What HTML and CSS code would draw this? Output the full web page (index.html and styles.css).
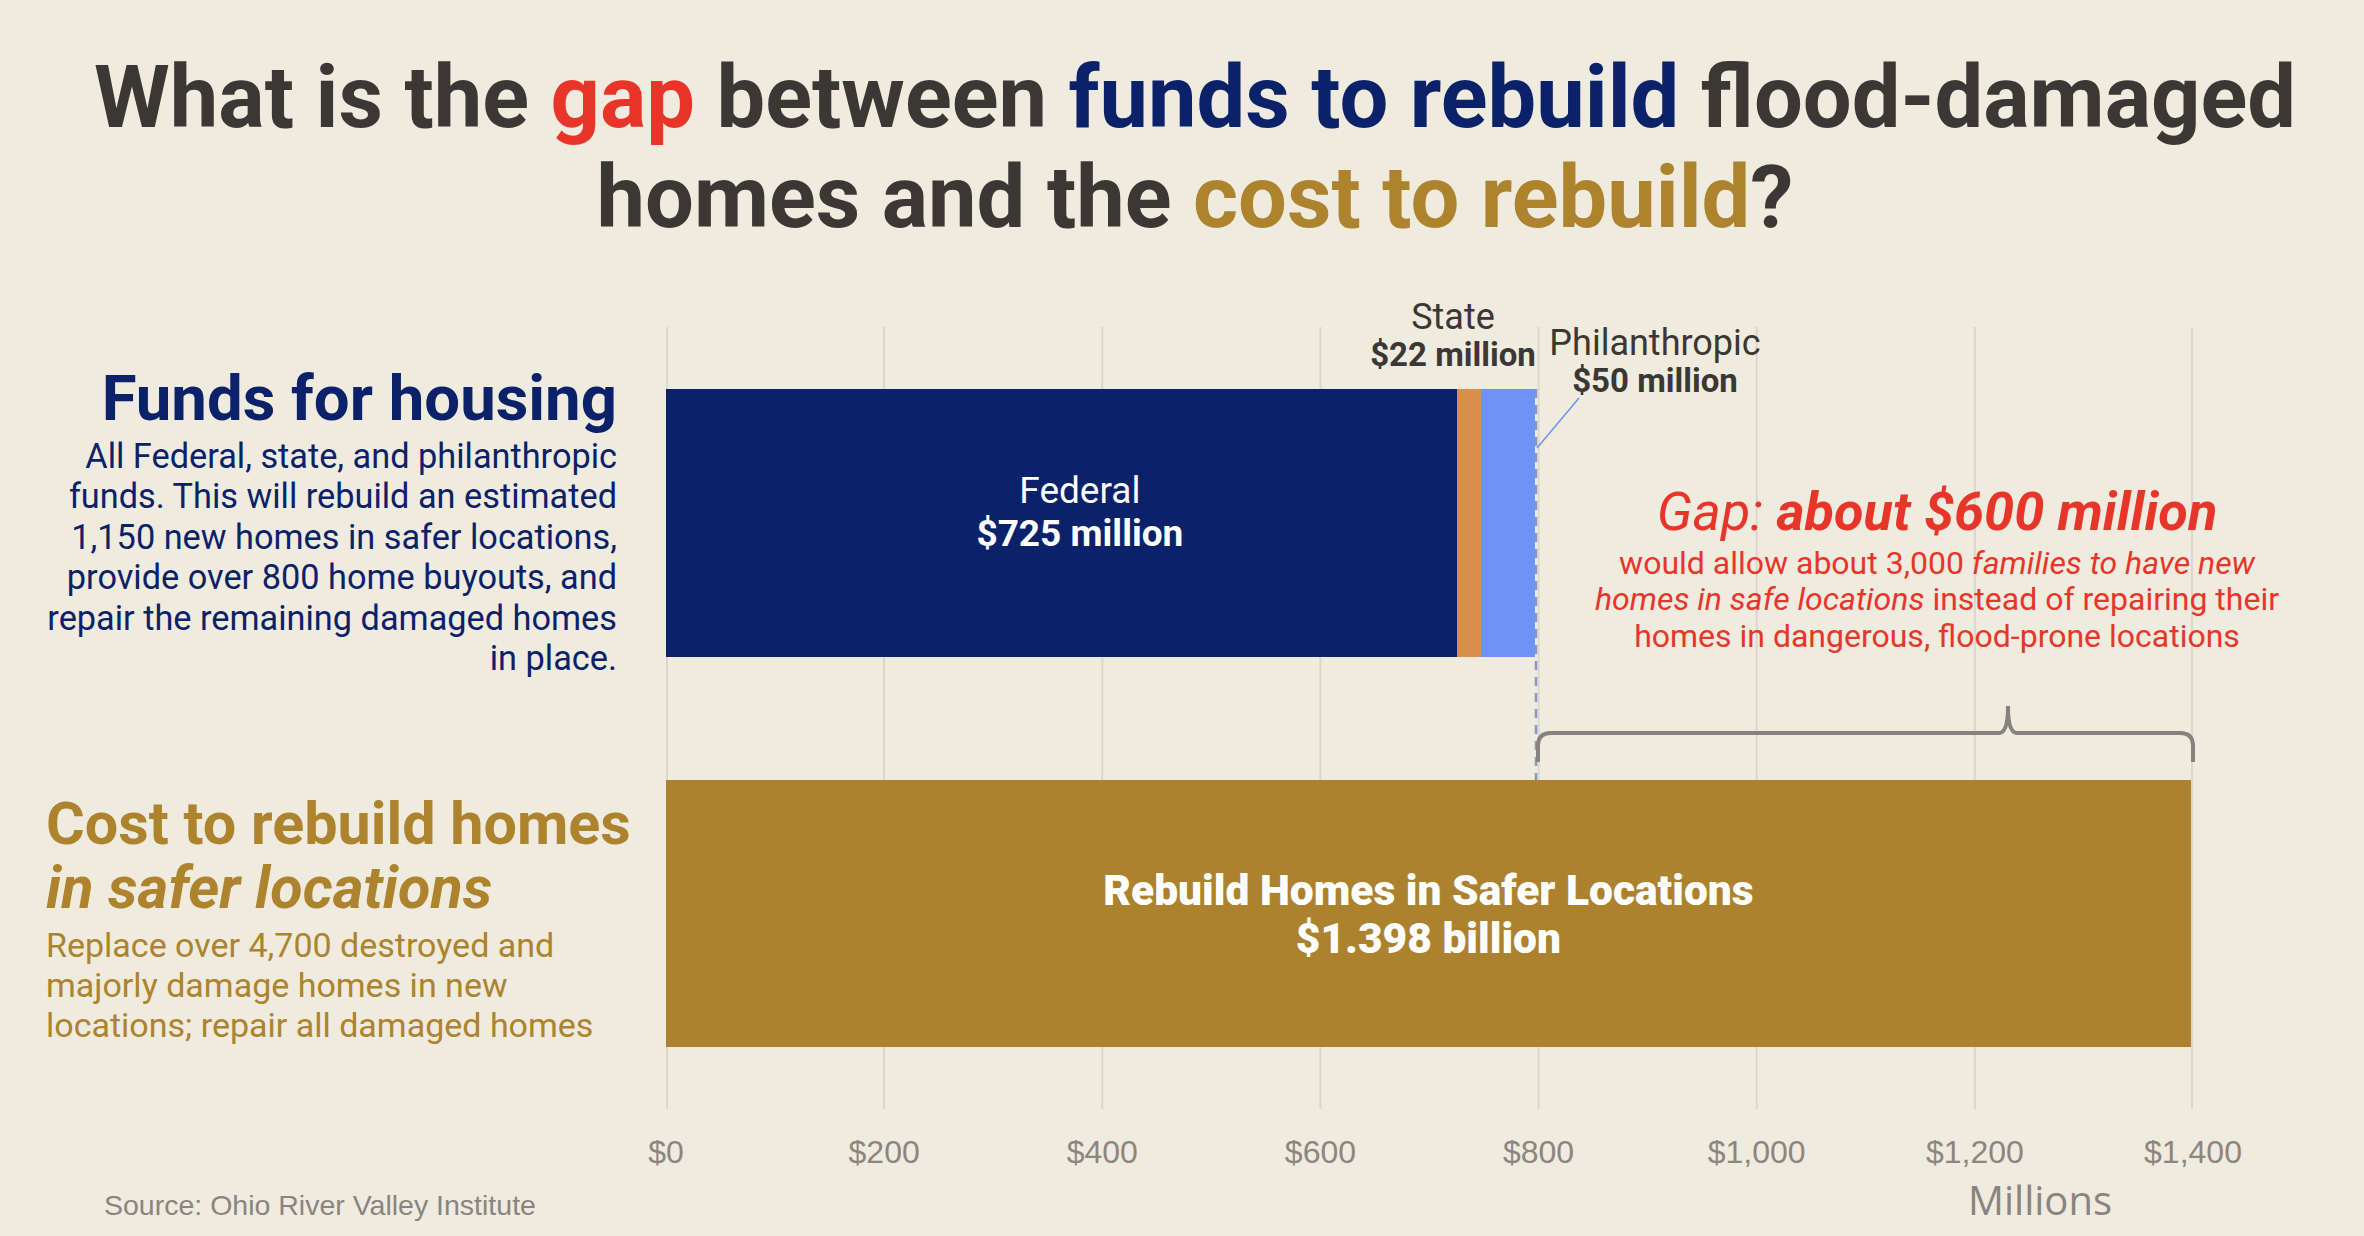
FILE: index.html
```html
<!DOCTYPE html>
<html lang="en">
<head>
<meta charset="utf-8">
<title>Funding gap</title>
<link rel="stylesheet" href="styles.css">
</head>
<body>
<div class="page">
  <h1 class="title">What is the <span class="c-red">gap</span> between <span class="c-navy">funds to rebuild</span> flood-damaged<br>homes and the <span class="c-gold">cost to rebuild</span>?</h1>

  <div class="chart">
    <div class="labels">
      <div class="label label-funds">
        <h2>Funds for housing</h2>
        <p>All Federal, state, and philanthropic<br>funds. This will rebuild an estimated<br>1,150 new homes in safer locations,<br>provide over 800 home buyouts, and<br>repair the remaining damaged homes<br>in place.</p>
      </div>
      <div class="label label-cost">
        <h2>Cost to rebuild homes<br><em>in safer locations</em></h2>
        <p>Replace over 4,700 destroyed and<br>majorly damage homes in new<br>locations; repair all damaged homes</p>
      </div>
    </div>

    <div class="plotcol">
      <div class="plot">
        <svg class="grid" viewBox="0 0 1527 782" preserveAspectRatio="none">
          <line x1="1" y1="0" x2="1" y2="782"/>
          <line x1="218.1" y1="0" x2="218.1" y2="782"/>
          <line x1="436.3" y1="0" x2="436.3" y2="782"/>
          <line x1="654.4" y1="0" x2="654.4" y2="782"/>
          <line x1="872.6" y1="0" x2="872.6" y2="782"/>
          <line x1="1090.7" y1="0" x2="1090.7" y2="782"/>
          <line x1="1308.9" y1="0" x2="1308.9" y2="782"/>
          <line x1="1526" y1="0" x2="1526" y2="782"/>
        </svg>

        <div class="bar bar-funds">
          <div class="seg seg-federal" style="width:51.786%">
            <span>Federal</span>
            <b>$725 million</b>
          </div>
          <div class="seg seg-state" style="width:1.571%"></div>
          <div class="seg seg-phil" style="width:3.571%"></div>
        </div>

        <div class="bar bar-cost" style="width:99.857%">
          <b>Rebuild Homes in Safer Locations</b>
          <b>$1.398 billion</b>
        </div>

        <svg class="overlay" viewBox="0 0 1527 782" preserveAspectRatio="none">
          <line class="dash" x1="870" y1="62" x2="870" y2="453"/>
          <line class="leader" x1="913" y1="71" x2="871" y2="121"/>
          <path class="brace" d="M872,435 L872,419 Q872,406 885,406 L1333,406 Q1342,406 1342,379 Q1342,406 1351,406 L1514,406 Q1527,406 1527,419 L1527,435"/>
        </svg>

        <div class="ann ann-state"><span>State</span><b>$22 million</b></div>
        <div class="ann ann-phil"><span>Philanthropic</span><b>$50 million</b></div>
        <div class="ann ann-gap">
          <div class="gap-head"><em>Gap: </em><strong>about $600 million</strong></div>
          <p>would allow about 3,000 <em>families to have new</em><br><em>homes in safe locations</em> instead of repairing their<br>homes in dangerous, flood-prone locations</p>
        </div>
      </div>

      <div class="axis">
        <span>$0</span><span>$200</span><span>$400</span><span>$600</span><span>$800</span><span>$1,000</span><span>$1,200</span><span>$1,400</span>
      </div>
    </div>
  </div>

  <div class="footer">
    <span class="source">Source: Ohio River Valley Institute</span>
    <span class="unit">Millions</span>
  </div>
</div>
</body>
</html>
```

FILE: styles.css
```css
* { box-sizing: border-box; }

body {
  margin: 0;
  background: #efebde;
  font-family: Roboto, "Noto Sans", sans-serif;
  color: #3b3734;
}

.page {
  width: 2364px;
  height: 1236px;
  overflow: hidden;
}

.c-red { color: #e9342a; }
.c-navy { color: #0b226b; }
.c-gold { color: #ad832e; }

.title {
  margin: 0;
  padding: 47.6px 0 0 26px;
  text-align: center;
  font-size: 86.6px;
  line-height: 100px;
  font-weight: 700;
  color: #3b3734;
  white-space: nowrap;
}

.chart {
  display: grid;
  grid-template-columns: 666px 1527px;
  margin-top: 79.4px;
}

/* left labels */
.labels {
  display: flex;
  flex-direction: column;
}

.label h2 {
  margin: 0;
  font-weight: 700;
}

.label p {
  margin: 0;
}

.label-funds {
  margin-top: 40.5px;
  padding-right: 49px;
  text-align: right;
  color: #0b226b;
}

.label-funds h2 {
  font-size: 63.5px;
  line-height: 64px;
}

.label-funds p {
  margin-top: 4.5px;
  font-size: 34.3px;
  line-height: 40.4px;
}

.label-cost {
  margin-top: 113.1px;
  padding-left: 46px;
  color: #ad832e;
}

.label-cost h2 {
  font-size: 59.3px;
  line-height: 64px;
  white-space: nowrap;
}

.label-cost h2 em {
  font-style: italic;
}

.label-cost p {
  margin-top: 5.7px;
  font-size: 34px;
  line-height: 40px;
}

/* plot */
.plot {
  position: relative;
  height: 782px;
  padding-top: 62px;
  display: flex;
  flex-direction: column;
  gap: 123px;
}

.grid {
  position: absolute;
  left: 0;
  top: 0;
  width: 100%;
  height: 100%;
  overflow: visible;
}

.grid line {
  stroke: #dad6d0;
  stroke-width: 2;
}

.overlay {
  position: absolute;
  left: 0;
  top: 0;
  width: 100%;
  height: 100%;
  overflow: visible;
  z-index: 2;
}

.overlay .dash {
  stroke: #8797c4;
  stroke-width: 2.5;
  stroke-dasharray: 9 7;
}

.overlay .leader {
  stroke: #6d93f6;
  stroke-width: 1.5;
}

.overlay .brace {
  fill: none;
  stroke: #86827e;
  stroke-width: 4;
}

.bar {
  position: relative;
  z-index: 1;
}

.bar-funds {
  display: flex;
  height: 268px;
}

.seg {
  height: 100%;
}

.seg-federal {
  background: #0b226b;
  color: #fff;
  display: flex;
  flex-direction: column;
  align-items: center;
  padding: 79.8px 0 0 37px;
  font-size: 37px;
  line-height: 43px;
  white-space: nowrap;
}

.seg-federal span { font-weight: 400; }
.seg-federal b { font-weight: 700; }

.seg-state { background: #d98f4c; }
.seg-phil { background: #6d93f6; }

.bar-cost {
  height: 267px;
  background: #ad822e;
  color: #fff;
  display: flex;
  flex-direction: column;
  align-items: center;
  padding-top: 87.5px;
  font-size: 42.5px;
  line-height: 48px;
  font-weight: 700;
  white-space: nowrap;
}

/* annotations */
.ann {
  position: absolute;
  z-index: 3;
  text-align: center;
  white-space: nowrap;
  transform: translateX(-50%);
}

.ann-state,
.ann-phil {
  display: flex;
  flex-direction: column;
  align-items: center;
  line-height: 38px;
  color: #3b3734;
}

.ann-state span,
.ann-phil span {
  font-size: 36px;
  font-weight: 400;
}

.ann-state b,
.ann-phil b {
  font-size: 33px;
  font-weight: 700;
}

.ann-state { left: 787px; top: -29.3px; }
.ann-phil { left: 989px; top: -3.3px; }

.ann-gap {
  left: 1271px;
  top: 157.5px;
  color: #e8352a;
}

.gap-head {
  font-size: 54px;
  line-height: 56px;
  font-style: italic;
}

.gap-head em { font-weight: 400; }
.gap-head strong { font-weight: 700; }

.ann-gap p {
  margin: 4.3px 0 0;
  font-size: 32px;
  line-height: 36.5px;
}

/* axis */
.axis {
  display: flex;
  justify-content: space-between;
  margin-top: 23px;
  height: 40px;
  font-family: "Liberation Sans", Arial, sans-serif;
  font-size: 32px;
  line-height: 40px;
  color: #8c8580;
}

.axis span {
  width: 0;
  display: flex;
  justify-content: center;
  white-space: nowrap;
}

.footer {
  display: flex;
  align-items: baseline;
  margin-top: 4.5px;
  color: #8a8480;
}

.source {
  padding-left: 104px;
  font-family: "Liberation Sans", Arial, sans-serif;
  font-size: 28.5px;
  line-height: 34px;
}

.unit {
  margin-left: auto;
  padding-right: 252px;
  font-family: "Open Sans", sans-serif;
  font-size: 40px;
  line-height: 48px;
}
```
